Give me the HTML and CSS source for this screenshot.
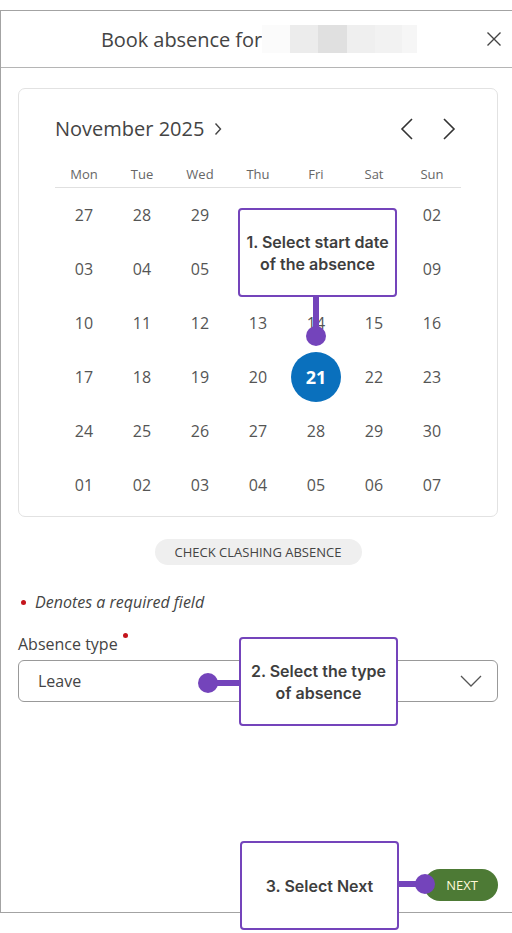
FILE: index.html
```html
<!DOCTYPE html>
<html lang="en">
<head>
<meta charset="utf-8">
<link rel="stylesheet" href="styles.css">
</head>
<body>
<div class="page">
  <div class="panel">
    <header class="head">
      <div class="title">
        <span class="title-text">Book absence for</span>
        <span class="blur">
          <i class="b1"></i><i class="b2"></i><i class="b3"></i><i class="b4"></i><i class="b5"></i><i class="b6"></i>
        </span>
      </div>
      <svg class="close" width="16" height="16" viewBox="0 0 16 16"><path d="M1.5 1.5 L14.5 14.5 M14.5 1.5 L1.5 14.5" stroke="#444" stroke-width="1.4" fill="none"/></svg>
    </header>

    <div class="body">
      <section class="cal">
        <div class="cal-top">
          <div class="month">November 2025
            <svg class="month-chev" width="8" height="14" viewBox="0 0 8 14"><path d="M1.5 1.5 L6.5 7 L1.5 12.5" stroke="#444" stroke-width="1.4" fill="none"/></svg>
          </div>
          <div class="nav">
            <svg width="14" height="22" viewBox="0 0 14 22"><path d="M12 1 L2 11 L12 21" stroke="#333" stroke-width="1.6" fill="none"/></svg>
            <svg width="14" height="22" viewBox="0 0 14 22"><path d="M2 1 L12 11 L2 21" stroke="#333" stroke-width="1.6" fill="none"/></svg>
          </div>
        </div>
        <div class="grid dows">
          <span>Mon</span><span>Tue</span><span>Wed</span><span>Thu</span><span>Fri</span><span>Sat</span><span>Sun</span>
        </div>
        <div class="grid days">
          <span>27</span><span>28</span><span>29</span><span>30</span><span>31</span><span>01</span><span>02</span>
          <span>03</span><span>04</span><span>05</span><span>06</span><span>07</span><span>08</span><span>09</span>
          <span>10</span><span>11</span><span>12</span><span>13</span><span>14</span><span>15</span><span>16</span>
          <span>17</span><span>18</span><span>19</span><span>20</span><span><b class="sel">21</b></span><span>22</span><span>23</span>
          <span>24</span><span>25</span><span>26</span><span>27</span><span>28</span><span>29</span><span>30</span>
          <span>01</span><span>02</span><span>03</span><span>04</span><span>05</span><span>06</span><span>07</span>
        </div>
      </section>

      <div class="clash-row"><button class="clash">CHECK CLASHING ABSENCE</button></div>

      <p class="req"><span class="dot"></span><em>Denotes a required field</em></p>

      <label class="lbl">Absence type<span class="dot sup"></span></label>
      <div class="select">
        <span>Leave</span>
        <svg width="22" height="12" viewBox="0 0 22 12"><path d="M1 1 L11 11 L21 1" stroke="#555" stroke-width="1.3" fill="none"/></svg>
      </div>

      <div class="foot"><button class="next">NEXT</button></div>
    </div>
  </div>

  <div class="callout c1">1. Select start date<br>of the absence</div>
  <div class="vbar v1"></div><div class="pin p1"></div>

  <div class="callout c2">2. Select the type<br>of absence</div>
  <div class="hbar h2"></div><div class="pin p2"></div>

  <div class="callout c3">3. Select Next</div>
  <div class="hbar h3"></div><div class="pin p3"></div>
</div>
</body>
</html>
```

FILE: styles.css
```css
html, body { margin: 0; padding: 0; overflow: hidden; background: #fff; }
body { font-family: "Open Sans", "Noto Sans", sans-serif; color: #444; }
.page { position: relative; width: 512px; height: 933px; overflow: hidden; }

.panel {
  margin-top: 10px;
  width: 514px;
  height: 901px;
  border: 1px solid #a3a3a3;
  border-right: 0;
  display: flex;
  flex-direction: column;
}

.head {
  height: 56px;
  flex: none;
  border-bottom: 1px solid #b5b5b5;
  position: relative;
  display: flex;
  align-items: center;
  justify-content: center;
}
.title { display: flex; align-items: center; padding-left: 2px; }
.title-text { font-size: 20px; color: #444; letter-spacing: -0.05px; }
.blur { display: flex; height: 28px; margin-left: 0; }
.blur i { display: block; height: 28px; }
.b1 { width: 28px; background: #fbfbfb; }
.b2 { width: 28px; background: #ececec; }
.b3 { width: 29px; background: #e0e0e0; }
.b4 { width: 28px; background: #efefef; }
.b5 { width: 27px; background: #f2f2f2; }
.b6 { width: 15px; background: #f6f6f6; }
.close { position: absolute; right: 13px; top: 20px; }

.body {
  flex: 1;
  display: flex;
  flex-direction: column;
  padding: 20px 17px 11px 17px;
}

.cal {
  border: 1px solid #e2e2e2;
  border-radius: 7px;
  padding: 26px 36px 4px 36px;
}
.cal-top { display: flex; justify-content: space-between; align-items: center; height: 26px; }
.month { font-size: 20px; color: #444; display: flex; align-items: center; gap: 10px; }
.month-chev { margin-top: 1px; }
.nav { display: flex; gap: 28px; margin-right: 5px; margin-top: 2px; }

.grid { display: grid; grid-template-columns: repeat(7, 58px); }
.dows {
  margin-top: 20px;
  height: 26px;
  line-height: 26px;
  border-bottom: 1px solid #e0e0e0;
  font-size: 13px;
  color: #666;
  text-align: center;
}
.days span {
  height: 54px;
  display: flex;
  align-items: center;
  justify-content: center;
  font-size: 16px;
  color: #555;
}
.sel {
  width: 50px; height: 50px; border-radius: 50%;
  background: #0a70bd;
  color: #fff;
  font-size: 18px;
  font-weight: 700;
  display: flex; align-items: center; justify-content: center;
}

.clash-row { display: flex; justify-content: center; margin-top: 22px; }
.clash {
  font-family: "Open Sans", sans-serif;
  font-size: 13px;
  color: #444;
  background: #efefef;
  border: 0;
  border-radius: 13px;
  height: 26px;
  width: 207px;
  padding: 0;
}

.req { margin: 26px 0 0 0; display: flex; align-items: center; font-size: 16px; color: #444; height: 22px; }
.dot { display: inline-block; width: 5px; height: 5px; border-radius: 50%; background: #c4141c; }
.req .dot { margin: 0 9px 0 3px; }
.lbl { margin-top: 20px; font-size: 16px; color: #444; display: flex; align-items: flex-start; height: 22px; }
.dot.sup { margin: 0 0 0 5px; }
.select {
  margin-top: 5px;
  height: 40px;
  border: 1px solid #999;
  border-radius: 6px;
  display: flex;
  align-items: center;
  justify-content: space-between;
  padding: 0 15px 0 19px;
  font-size: 16px;
  color: #444;
}

.foot { margin-top: auto; display: flex; justify-content: flex-end; }
.next {
  width: 74px; height: 32px;
  border: 0; border-radius: 16px;
  background: #4d7a35;
  color: #fff9d8;
  font-family: "Open Sans", sans-serif;
  font-size: 13px;
  padding: 0 0 0 2px;
}

.callout {
  position: absolute;
  width: 155px;
  height: 85px;
  border: 2px solid #7444bb;
  border-radius: 4px;
  background: #fff;
  font-family: Inter, "Noto Sans", sans-serif;
  font-weight: 600;
  font-size: 16px;
  line-height: 22px;
  color: #3e3e3e;
  display: flex;
  align-items: center;
  justify-content: center;
  text-align: center;
}
.c1 { left: 238px; top: 208px; }
.c2 { left: 239px; top: 637px; }
.c3 { left: 240px; top: 841px; }

.vbar, .hbar, .pin { position: absolute; background: #7444bb; }
.pin { width: 20px; height: 20px; border-radius: 50%; }
.v1 { left: 313px; top: 297px; width: 6px; height: 39px; }
.p1 { left: 306px; top: 326px; }
.h2 { left: 208px; top: 680px; width: 32px; height: 6px; }
.p2 { left: 198px; top: 673px; }
.h3 { left: 399px; top: 881px; width: 26px; height: 6px; }
.p3 { left: 415px; top: 874px; }
```
